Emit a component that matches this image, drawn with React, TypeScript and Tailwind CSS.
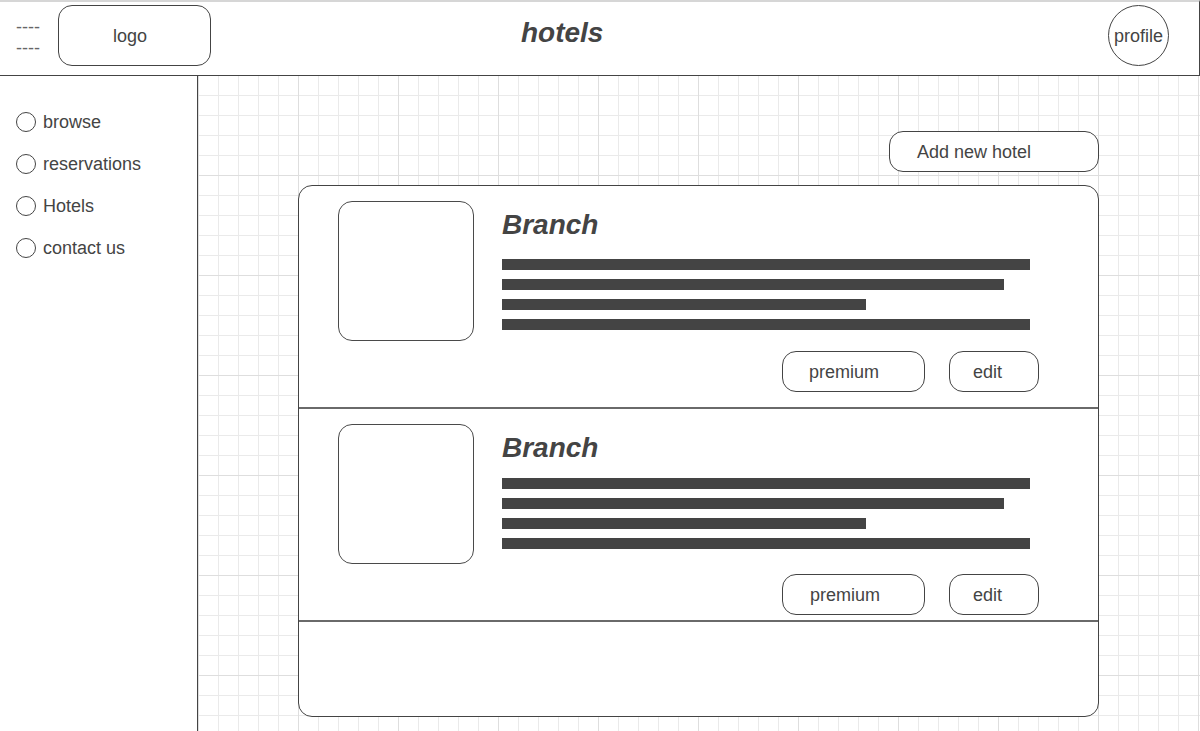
import React from "react";

// ==========================
//      DATA
// ==========================
const navItems = ["browse", "reservations", "Hotels", "contact us"];

const bars = ["w-[528px]", "w-[502px]", "w-[364px]", "w-[528px]"];

const branches = [
  { id: 1, height: "h-[223px]", barsGap: "mt-[20px]", premiumPad: "pl-[26px]" },
  { id: 2, height: "h-[213px]", barsGap: "mt-[16px]", premiumPad: "pl-[27px]" },
];

// ==========================
//      HEADER
// ==========================
const Header = () => (
  <header className="h-[76px] w-full flex items-start bg-white border-t-2 border-t-[#d6d6d6] border-b border-b-[#444] border-r border-r-[#444] pl-4 pr-[30px] shrink-0">
    <div className="mt-[15px] text-[18px] leading-[21px] text-[#666]">
      <div>----</div>
      <div>----</div>
    </div>

    <div className="ml-[18px] mt-[3px] w-[153px] h-[61px] rounded-[14px] border border-[#444] flex items-center justify-center pr-[9px] pt-[2px] text-[18px] text-[#444]">
      logo
    </div>

    <h1 className="ml-[310px] mt-[17px] text-[28px] leading-[28px] font-bold italic text-[#444]">
      hotels
    </h1>

    <div className="ml-auto mt-[3px] w-[61px] h-[61px] rounded-full border border-[#444] flex items-center justify-center pt-[2px] text-[18px] text-[#444]">
      profile
    </div>
  </header>
);

// ==========================
//      SIDEBAR
// ==========================
const Sidebar = () => (
  <aside className="w-[198px] shrink-0 bg-white border-r border-r-[#444] pt-[36px] pl-4 flex flex-col gap-[22px]">
    {navItems.map((item) => (
      <div key={item} className="h-[20px] flex items-center gap-[7px] text-[18px] text-[#444]">
        <span className="w-[20px] h-[20px] rounded-full border border-[#444] shrink-0"></span>
        <span className="pt-[1px]">{item}</span>
      </div>
    ))}
  </aside>
);

// ==========================
//      BRANCH ROW
// ==========================
const BranchRow = ({ branch }: { branch: (typeof branches)[number] }) => (
  <div className={`${branch.height} shrink-0 border-b-2 border-b-[#6a6a6a] pt-[15px] flex flex-col`}>
    <div className="flex pl-[39px]">
      <div className="w-[136px] h-[140px] rounded-[14px] border border-[#4a4a4a] shrink-0"></div>
      <div className="ml-[28px] pt-[10px]">
        <h2 className="text-[28px] leading-[28px] font-bold italic text-[#444]">Branch</h2>
        <div className={`${branch.barsGap} flex flex-col gap-[9px]`}>
          {bars.map((w, i) => (
            <div key={i} className={`${w} h-[11px] bg-[#444]`}></div>
          ))}
        </div>
      </div>
    </div>

    <div className="mt-[10px] flex justify-end gap-[24px] pr-[59px]">
      <button className={`w-[143px] h-[41px] rounded-[14px] border border-[#444] ${branch.premiumPad} pt-[1px] text-left text-[18px] text-[#444]`}>
        premium
      </button>
      <button className="w-[90px] h-[41px] rounded-[14px] border border-[#444] pl-[23px] pt-[1px] text-left text-[18px] text-[#444]">
        edit
      </button>
    </div>
  </div>
);

// ==========================
//      MAIN
// ==========================
const HotelsBoard = () => (
  <main className="flex-1 pt-[55px] pl-[100px] bg-white bg-[linear-gradient(to_right,#dedede_1px,transparent_1px),linear-gradient(to_bottom,#dedede_1px,transparent_1px),linear-gradient(to_right,#eaeaea_1px,transparent_1px),linear-gradient(to_bottom,#eaeaea_1px,transparent_1px)] bg-[size:100px_100px,100px_100px,20px_20px,20px_20px] bg-[position:0_-1px]">
    <div className="w-[801px] flex flex-col items-end">
      <button className="w-[210px] h-[41px] rounded-[14px] border border-[#444] bg-white pl-[27px] pt-[2px] text-left text-[18px] text-[#444]">
        Add new hotel
      </button>

      <div className="mt-[13px] w-[801px] h-[532px] rounded-[14px] border border-[#444] bg-white overflow-hidden flex flex-col">
        {branches.map((b) => (
          <BranchRow key={b.id} branch={b} />
        ))}
        <div className="flex-1"></div>
      </div>
    </div>
  </main>
);

export default function App() {
  return (
    <div className="w-[1200px] h-[731px] overflow-hidden flex flex-col bg-white font-['Liberation_Sans',Arial,sans-serif]">
      <Header />
      <div className="flex flex-1">
        <Sidebar />
        <HotelsBoard />
      </div>
    </div>
  );
}
